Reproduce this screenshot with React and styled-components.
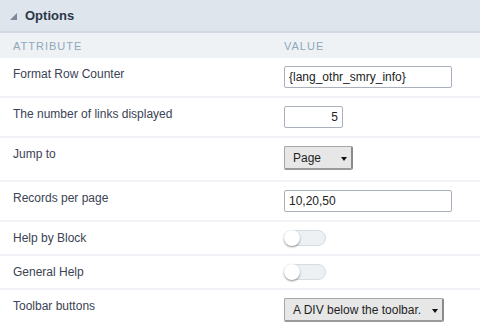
import React from "react";
import styled, { createGlobalStyle } from "styled-components";

const Global = createGlobalStyle`
  body {
    margin: 0;
    background: #ffffff;
    font-family: "Liberation Sans", Arial, sans-serif;
  }
`;

const Panel = styled.div`
  width: 480px;
  border-bottom: 2px solid #d6dee6;
`;

const Header = styled.div`
  display: flex;
  align-items: center;
  gap: 8px;
  height: 31px;
  padding-left: 10px;
  background: #dfe5ec;
  border-bottom: 2px solid #d0d9e2;
`;

const Corner = styled.span`
  width: 0;
  height: 0;
  border-left: 7px solid transparent;
  border-bottom: 7px solid #7d8896;
  margin-top: 1px;
`;

const Title = styled.span`
  font-size: 13px;
  font-weight: bold;
  color: #2c3749;
`;

const Grid = styled.div`
  display: grid;
  grid-template-columns: 284px 1fr;
`;

const HeadCell = styled.div`
  height: 25px;
  display: flex;
  align-items: center;
  padding-left: ${(p) => (p.$first ? "13px" : "0")};
  background: #eef2f5;
  color: #8ea7bb;
  font-size: 11px;
  letter-spacing: 1px;
`;

const Label = styled.div`
  padding: 9px 0 8px 13px;
  font-size: 12px;
  line-height: 14px;
  color: #3b4354;
  border-top: ${(p) => (p.$first ? "none" : "2px solid #f0f2f5")};
`;

const Value = styled.div`
  padding: 8px 0;
  border-top: ${(p) => (p.$first ? "none" : "2px solid #f0f2f5")};
  display: flex;
  align-items: flex-start;
`;

const TextInput = styled.input`
  box-sizing: border-box;
  width: ${(p) => p.$w}px;
  height: 22px;
  border: 1px solid #a9b0bb;
  border-radius: 2px;
  padding: 0 4px;
  font-family: "Liberation Sans", Arial, sans-serif;
  font-size: 12px;
  color: #222;
  text-align: ${(p) => (p.$right ? "right" : "left")};
  outline: none;
`;

const Select = styled.div`
  box-sizing: border-box;
  width: ${(p) => p.$w}px;
  height: 24px;
  margin-bottom: ${(p) => p.$gap || 0}px;
  display: flex;
  align-items: center;
  justify-content: space-between;
  padding: 0 4px 0 8px;
  background: #e7e7e7;
  border: 1px solid #a6a6a6;
  border-right: 2px solid #8a8a8a;
  border-bottom: 2px solid #9a9a9a;
  border-radius: 2px;
  font-size: 12px;
  color: #1e1e1e;
`;

const Arrow = styled.span`
  width: 0;
  height: 0;
  border-left: 3px solid transparent;
  border-right: 3px solid transparent;
  border-top: 4px solid #111;
  margin-top: 2px;
`;

const Toggle = styled.div`
  position: relative;
  box-sizing: border-box;
  width: 42px;
  height: 16px;
  border-radius: 8px;
  background: #edf1f4;
  border: 1px solid #d4dce4;
`;

const Knob = styled.span`
  position: absolute;
  left: -1px;
  top: -1px;
  width: 16px;
  height: 16px;
  border-radius: 50%;
  background: #fff;
  box-shadow: 0 1px 2px rgba(0, 0, 0, 0.45);
`;

const rows = [
  { label: "Format Row Counter", kind: "input", text: "{lang_othr_smry_info}", w: 168 },
  { label: "The number of links displayed", kind: "input", text: "5", w: 59, right: true },
  { label: "Jump to", kind: "select", text: "Page", w: 69, gap: 2 },
  { label: "Records per page", kind: "input", text: "10,20,50", w: 168 },
  { label: "Help by Block", kind: "toggle" },
  { label: "General Help", kind: "toggle" },
  { label: "Toolbar buttons", kind: "select", text: "A DIV below the toolbar.", w: 160 },
];

function Control({ row }) {
  if (row.kind === "input")
    return <TextInput $w={row.w} $right={row.right} defaultValue={row.text} />;
  if (row.kind === "select")
    return (
      <Select $w={row.w} $gap={row.gap}>
        <span>{row.text}</span>
        <Arrow />
      </Select>
    );
  return (
    <Toggle>
      <Knob />
    </Toggle>
  );
}

export default function App() {
  return (
    <>
      <Global />
      <Panel>
        <Header>
          <Corner />
          <Title>Options</Title>
        </Header>
        <Grid>
          <HeadCell $first>ATTRIBUTE</HeadCell>
          <HeadCell>VALUE</HeadCell>
          {rows.map((r, i) => (
            <React.Fragment key={r.label}>
              <Label $first={i === 0}>{r.label}</Label>
              <Value $first={i === 0}>
                <Control row={r} />
              </Value>
            </React.Fragment>
          ))}
        </Grid>
      </Panel>
    </>
  );
}
